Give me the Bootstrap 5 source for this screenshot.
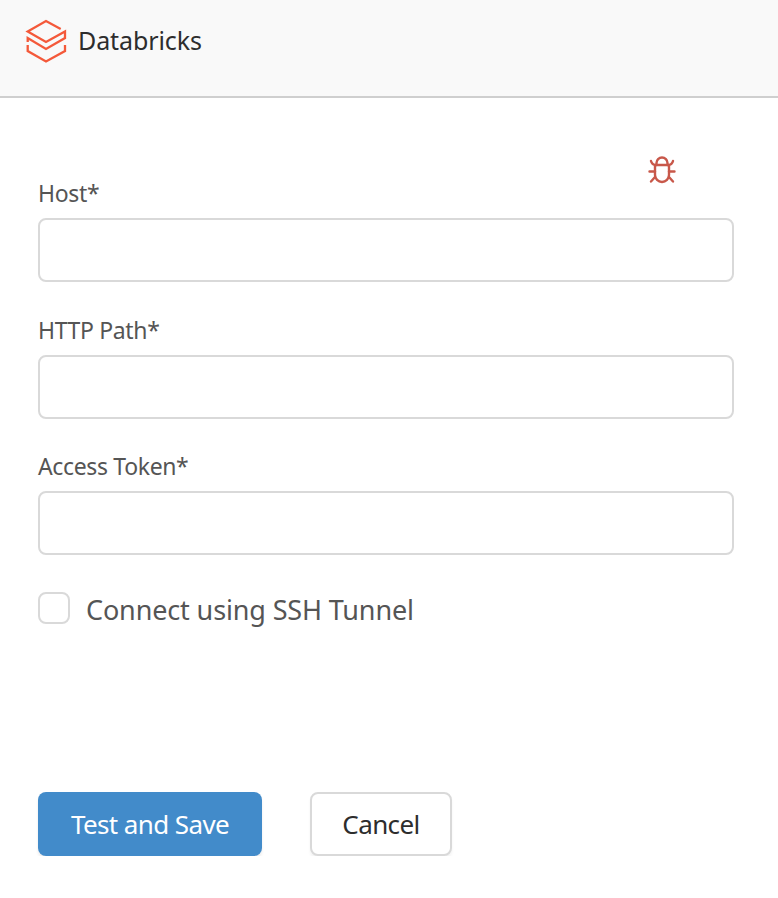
<!DOCTYPE html>
<html lang="en">
<head>
  <meta charset="utf-8"/>
  <link href="https://cdn.jsdelivr.net/npm/bootstrap@5.3.0/dist/css/bootstrap.min.css" rel="stylesheet">
  <title>Databricks</title>
  <style>
    body { font-family: "Noto Sans", "Liberation Sans", sans-serif; background: #fff; }
    .top-head { height: 98px; background: #f9f9f9; border-bottom: 2px solid #cfcfcf; padding: 0 0 14px 25px; gap: 11px; }
    .top-head span { font-size: 25px; line-height: 34px; color: #2d2d2d; letter-spacing: -.1px; margin-top: -2px; }
    .conn-form { padding: 58px 44px 0 38px; }
    .fld-label { font-size: 23px; line-height: 32px; color: #555; letter-spacing: -.35px; margin: 0 0 9px; padding-top: 1px; }
    .fld-input.form-control { height: 64px; border: 2px solid #d9d9d9; border-radius: 8px; box-shadow: none; }
    .fld-group { margin-bottom: 31px; }
    .fld-group + .fld-group { margin-bottom: 30px; }
    .bug-ico { margin: 0 57px 32px 0; }
    .ssh-check { gap: 16px; margin-top: 33px; }
    .ssh-check .form-check-input { width: 32px; height: 32px; margin: 0; border: 2px solid #d9d9d9; border-radius: 8px; box-shadow: none; }
    .ssh-check label { font-size: 27px; line-height: 36px; color: #555; letter-spacing: -.14px; margin-top: 4px; }
    .foot-btns { gap: 48px; margin-top: 164px; }
    .foot-btns .btn { height: 64px; font-size: 26px; border-radius: 8px; letter-spacing: -.6px; padding: 0; }
    .btn-test { width: 224px; background: #428bca; border: 0; color: #fff; box-shadow: 0 3px 3px rgba(0,0,0,.08); }
    .btn-cancel { width: 142px; background: #fff; border: 2px solid #d9d9d9; color: #2d2d2d; box-shadow: 0 3px 3px rgba(0,0,0,.05); }
  </style>
</head>
<body>
<div class="top-head d-flex align-items-center">
  <svg width="42" height="44" viewBox="0 0 42 44" fill="none" stroke="#f4593a" stroke-width="2.3">
    <path d="M35.700 10 21 2 2.700 12.500 21 23 40 12.500V19L21 30 2.700 19V23"/>
    <path d="M2.700 26V32L21 42.500 40 32V26"/>
  </svg>
  <span>Databricks</span>
</div>

<form class="conn-form">
  <div class="fld-group">
    <div class="d-flex justify-content-between align-items-end">
      <label for="host" class="fld-label">Host*</label>
      <svg class="bug-ico" width="30" height="30" viewBox="0 0 30 30" fill="none" stroke="#c8584a" stroke-width="2.4" stroke-linecap="round">
        <path d="M4 5Q5 9 9 9H21Q25 9 26 5"/>
        <path d="M8 9V19a7 7 0 0 0 14 0V9"/>
        <path d="M9.500 9V7a5.500 5.500 0 0 1 11 0V9"/>
        <path d="M8 15.500H2.500M22 15.500H27.500M8 21 4 25.500M22 21 26 25.500"/>
      </svg>
    </div>
    <input type="text" id="host" class="form-control fld-input">
  </div>
  <div class="fld-group">
    <label for="http-path" class="fld-label d-block">HTTP Path*</label>
    <input type="text" id="http-path" class="form-control fld-input">
  </div>
  <div class="fld-group">
    <label for="token" class="fld-label d-block">Access Token*</label>
    <input type="text" id="token" class="form-control fld-input">
  </div>
  <div class="ssh-check d-flex align-items-center">
    <input type="checkbox" id="ssh" class="form-check-input">
    <label for="ssh">Connect using SSH Tunnel</label>
  </div>
  <div class="foot-btns d-flex">
    <button type="button" class="btn btn-test">Test and Save</button>
    <button type="button" class="btn btn-cancel">Cancel</button>
  </div>
</form>
<script src="https://cdn.jsdelivr.net/npm/bootstrap@5.3.0/dist/js/bootstrap.bundle.min.js"></script>
</body>
</html>
